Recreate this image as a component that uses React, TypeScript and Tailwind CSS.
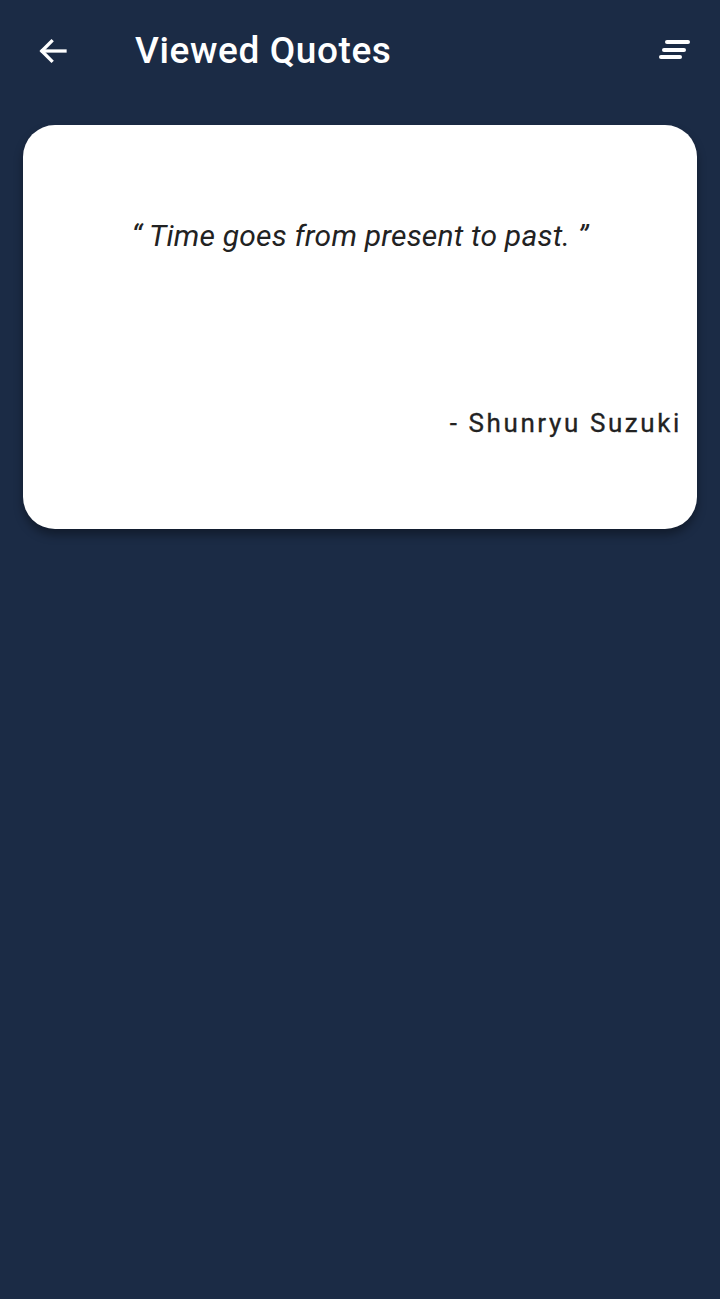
import React from "react";

const quote = {
  text: "Time goes from present to past.",
  author: "Shunryu Suzuki",
};

const App: React.FC = () => {
  return (
    <div className="w-[720px] h-[1299px] bg-[#1b2b45] font-['Roboto',sans-serif]">
      <div className="flex items-center h-[102px] px-[35px]">
        <button className="w-[36px] h-[36px] flex items-center justify-center text-white">
          <svg width="38" height="38" viewBox="0 0 24 24" fill="none" stroke="white" strokeWidth="2.2" strokeLinecap="square">
            <path d="M20 12H5" />
            <path d="M11 5.5L4.5 12L11 18.5" />
          </svg>
        </button>
        <h1 className="ml-[64px] text-white text-[37px] font-medium tracking-[0.6px]">Viewed Quotes</h1>
        <button className="ml-auto mr-[-10px] w-[40px] h-[40px] flex items-center justify-center">
          <svg width="40" height="40" viewBox="0 0 40 40" fill="none" stroke="white" strokeWidth="4" strokeLinecap="round">
            <path d="M12 11H33" />
            <path d="M9 19H29" />
            <path d="M6 26H25" />
          </svg>
        </button>
      </div>

      <div className="mx-[23px] mt-[23px] h-[404px] bg-white rounded-[32px] shadow-[0_6px_10px_rgba(0,0,0,0.35)] flex flex-col">
        <p className="mt-[88px] text-center italic text-[30px] text-[#222] tracking-[0.2px]">
          “ {quote.text} ”
        </p>
        <p className="mt-[146px] mr-[15px] text-right text-[26px] text-[#222] tracking-[2.6px] [-webkit-text-stroke:0.3px_#222]">
          - {quote.author}
        </p>
      </div>
    </div>
  );
};

export default App;
